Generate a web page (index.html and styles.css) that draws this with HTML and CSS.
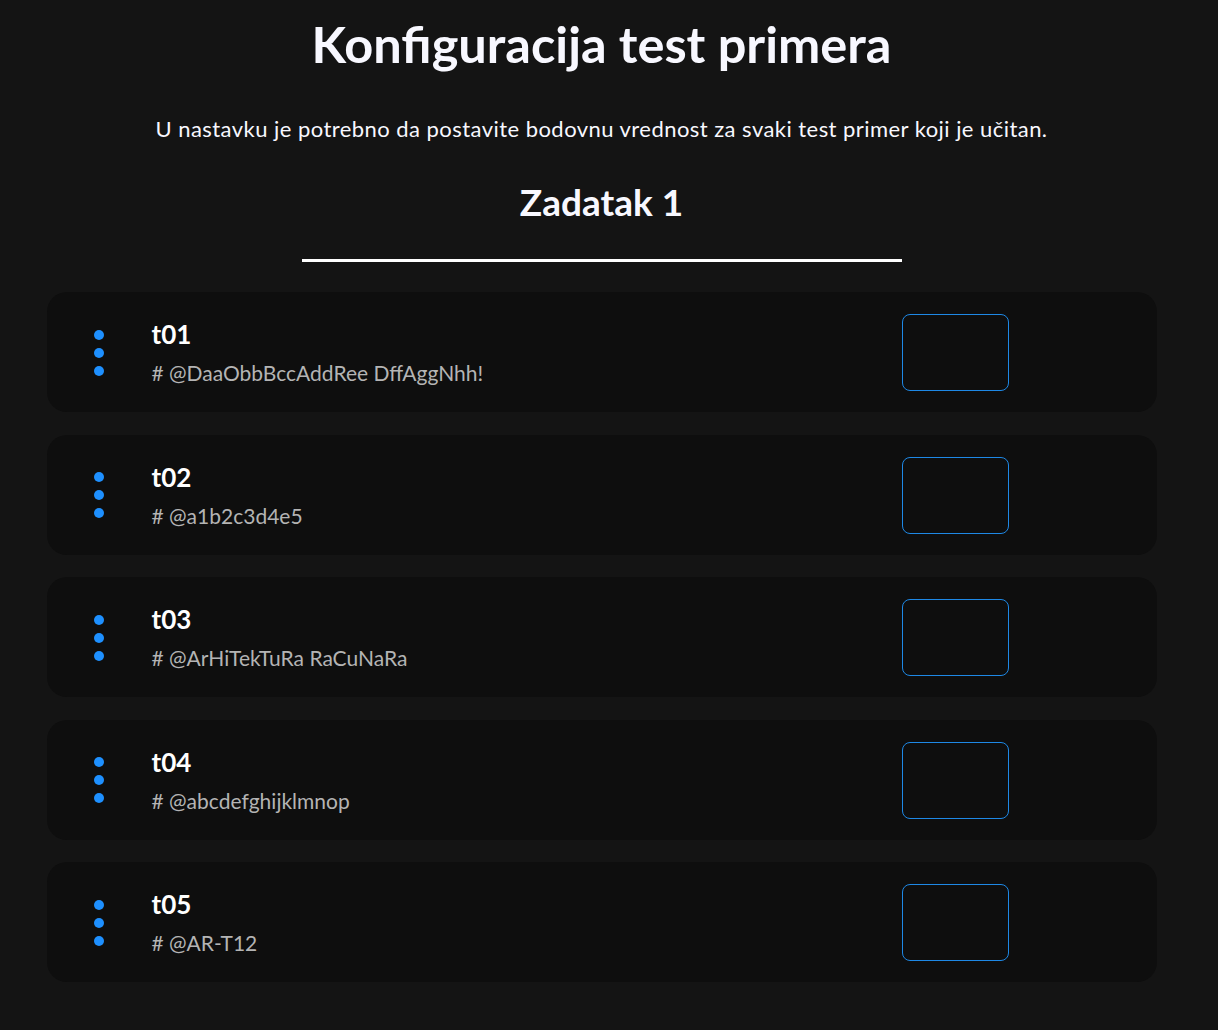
FILE: index.html
```html
<!DOCTYPE html>
<html lang="sr">
<head>
<meta charset="utf-8">
<title>Konfiguracija test primera</title>
<link rel="stylesheet" href="styles.css">
</head>
<body>
<div class="page">
  <h1 class="title">Konfiguracija test primera</h1>
  <p class="lead">U nastavku je potrebno da postavite bodovnu vrednost za svaki test primer koji je učitan.</p>
  <h2 class="task">Zadatak 1</h2>
  <hr class="divider">
  <div class="list">
    <div class="card">
      <div class="dots"><span></span><span></span><span></span></div>
      <div class="info"><div class="name">t01</div><div class="desc"># @DaaObbBccAddRee DffAggNhh!</div></div>
      <input class="points" type="text">
    </div>
    <div class="card">
      <div class="dots"><span></span><span></span><span></span></div>
      <div class="info"><div class="name">t02</div><div class="desc"># @a1b2c3d4e5</div></div>
      <input class="points" type="text">
    </div>
    <div class="card">
      <div class="dots"><span></span><span></span><span></span></div>
      <div class="info"><div class="name">t03</div><div class="desc"># @ArHiTekTuRa RaCuNaRa</div></div>
      <input class="points" type="text">
    </div>
    <div class="card">
      <div class="dots"><span></span><span></span><span></span></div>
      <div class="info"><div class="name">t04</div><div class="desc"># @abcdefghijklmnop</div></div>
      <input class="points" type="text">
    </div>
    <div class="card">
      <div class="dots"><span></span><span></span><span></span></div>
      <div class="info"><div class="name">t05</div><div class="desc"># @AR-T12</div></div>
      <input class="points" type="text">
    </div>
  </div>
</div>
</body>
</html>
```

FILE: styles.css
```css
html, body {
  margin: 0;
  padding: 0;
  background: #141414;
}
body {
  font-family: "Lato", "Noto Sans", sans-serif;
  color: #f8f8ff;
}
.page {
  width: 1110px;
  margin: 0 auto;
  padding: 0 15px 40px 0;
  display: flex;
  flex-direction: column;
  align-items: center;
}
.title {
  margin: 14px 0 0;
  font-size: 50.5px;
  font-weight: 700;
  line-height: 60px;
  text-align: center;
}
.lead {
  margin: 40px 0 0;
  font-size: 22px;
  letter-spacing: 0.45px;
  line-height: 30px;
  text-align: center;
}
.task {
  margin: 36px 0 0;
  font-size: 37px;
  font-weight: 700;
  line-height: 44px;
  text-align: center;
}
.divider {
  width: 600px;
  height: 3px;
  margin: 35px 0 0;
  border: 0;
  background: #ffffff;
}
.list {
  width: 100%;
  margin-top: 30px;
  display: flex;
  flex-direction: column;
  gap: 22.5px;
}
.card {
  display: flex;
  align-items: center;
  padding: 22px 148px 21px 47px;
  background: #0e0e0e;
  border-radius: 20px;
}
.dots {
  display: flex;
  flex-direction: column;
  gap: 8px;
  width: 10px;
}
.dots span {
  width: 10px;
  height: 10px;
  border-radius: 50%;
  background: #1e90ff;
}
.info {
  flex: 1;
  margin-left: 48px;
}
.name {
  font-size: 26px;
  font-weight: 700;
  line-height: 30px;
  color: #ffffff;
}
.desc {
  margin-top: 11px;
  font-size: 21px;
  line-height: 26px;
  color: #b4b4b4;
}
.points {
  width: 107px;
  height: 77px;
  box-sizing: border-box;
  border: 1px solid #1e88e5;
  border-radius: 8px;
  background: #0e0e0e;
  outline: none;
}
```
